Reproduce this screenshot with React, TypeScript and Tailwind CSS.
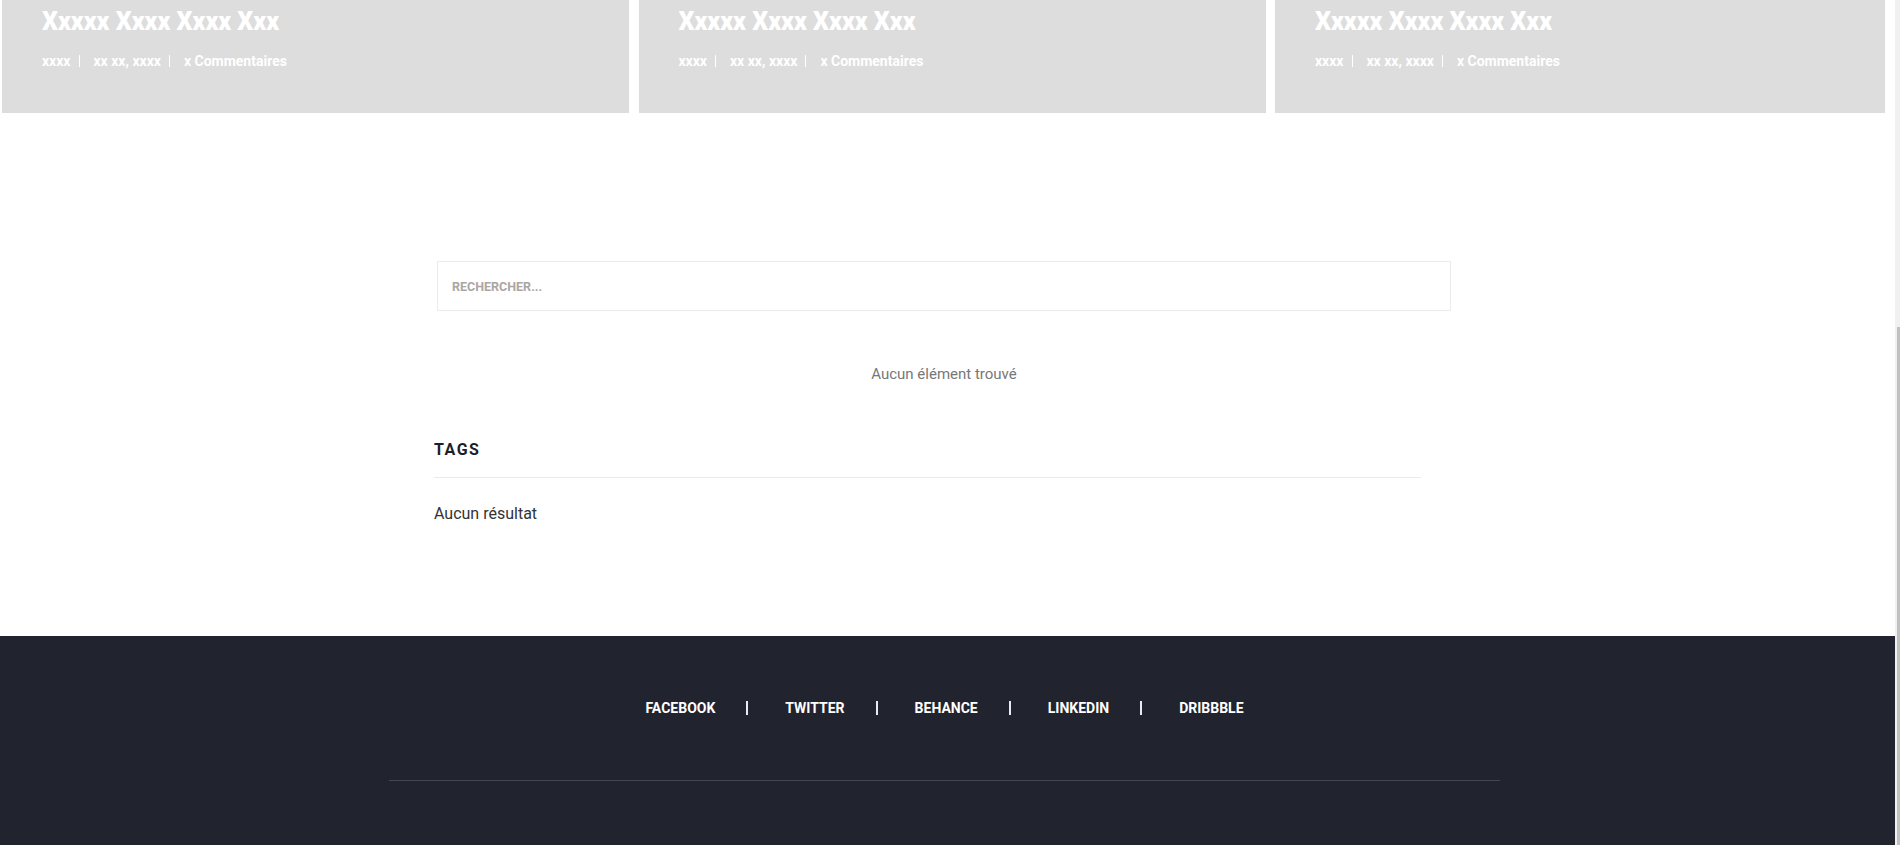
import React from "react";

const posts = [1, 2, 3];
const socials = ["FACEBOOK", "TWITTER", "BEHANCE", "LINKEDIN", "DRIBBBLE"];

const PostCard: React.FC = () => {
  return (
    <div className="h-[113px] bg-[#dddddd] pl-[40px] pt-[7px]">
      <h3 className="text-[25px] leading-[30px] font-black text-white">
        Xxxxx Xxxx Xxxx Xxx
      </h3>
      <div className="mt-[14px] flex items-center text-[14px] leading-[20px] font-bold text-white">
        <span>xxxx</span>
        <span className="ml-[8px] mr-[14px] h-[12px] w-px bg-white" />
        <span>xx xx, xxxx</span>
        <span className="ml-[8px] mr-[14px] h-[12px] w-px bg-white" />
        <span>x Commentaires</span>
      </div>
    </div>
  );
};

const App: React.FC = () => {
  return (
    <div className="flex h-[845px] w-full overflow-hidden bg-white font-['Roboto','Liberation_Sans',sans-serif]">
      <div className="flex min-w-0 flex-1 flex-col">
        {/* related posts */}
        <div className="grid grid-cols-[627px_627px_1fr] gap-[9.5px] pl-[2px] pr-[10px]">
          {posts.map((p) => (
            <PostCard key={p} />
          ))}
        </div>

        {/* search + tags */}
        <div className="mt-[148px] ml-[437px] w-[1014px]">
          <input
            type="text"
            placeholder="RECHERCHER..."
            className="block h-[50px] w-full border border-[#ebebeb] bg-white pl-[14px] text-[12.5px] font-bold uppercase text-[#333] outline-none placeholder:text-[#aba6a3]"
          />
          <p className="mt-[53px] text-center text-[15px] leading-[20px] text-[#777]">
            Aucun élément trouvé
          </p>
        </div>

        <div className="mt-[54px] ml-[434px] w-[987px]">
          <h4 className="text-[16px] leading-[24px] font-bold tracking-[1.5px] text-[#1d1d2b]">
            TAGS
          </h4>
          <div className="mt-[15px] h-px bg-[#ebebeb]" />
          <p className="mt-[24px] text-[16px] leading-[24px] text-[#333]">
            Aucun résultat
          </p>
        </div>

        {/* footer */}
        <footer className="mt-[110px] flex-1 bg-[#21232f] pt-[62px]">
          <div className="ml-[389px] w-[1111px]">
            <ul className="flex items-center justify-center text-[14px] leading-[20px] font-bold text-white">
              {socials.map((s, i) => (
                <React.Fragment key={s}>
                  {i > 0 && (
                    <li className="ml-[31px] mr-[37px] h-[14px] w-[2px] bg-[#e6ecf4]" />
                  )}
                  <li>{s}</li>
                </React.Fragment>
              ))}
            </ul>
            <div className="mt-[62px] h-px bg-[#44464f]" />
          </div>
        </footer>
      </div>

      {/* scrollbar */}
      <div className="flex w-[5px] flex-col bg-[#f1f1f1]">
        <div className="h-[327px]" />
        <div className="ml-[2px] flex-1 bg-[#c1c1c1]" />
      </div>
    </div>
  );
};

export default App;
